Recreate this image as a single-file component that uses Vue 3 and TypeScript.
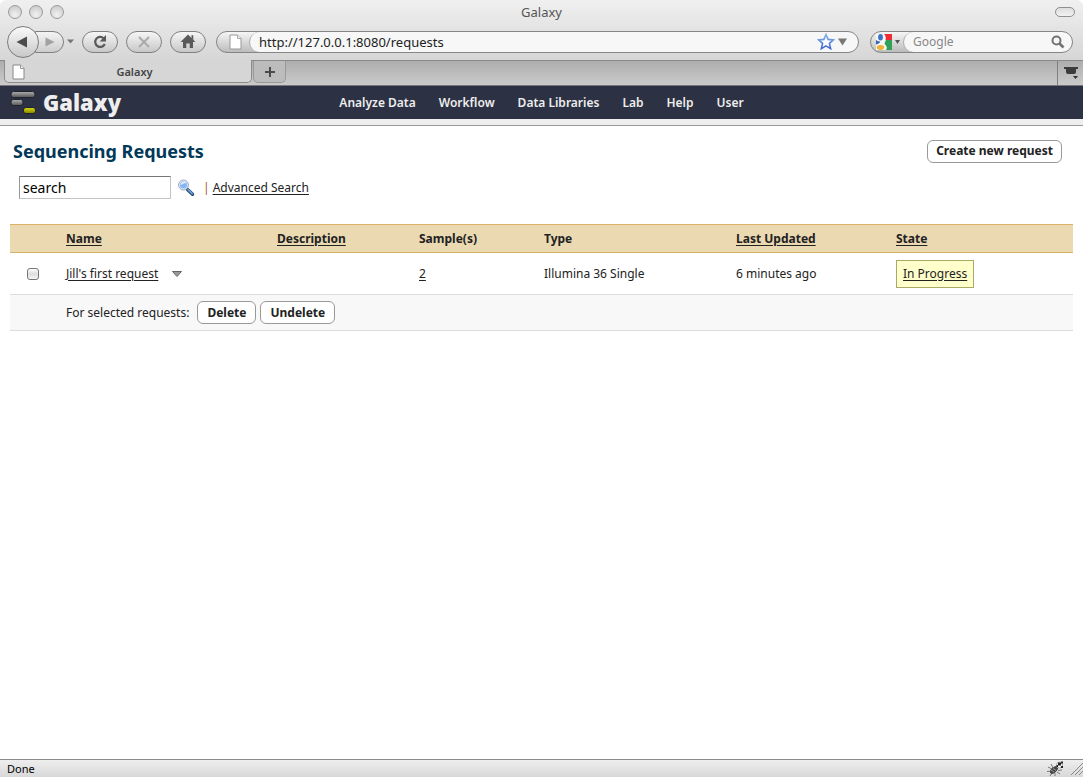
<script setup lang="ts">
import { ref } from 'vue'

interface Column {
  key: string
  label: string
  sortable: boolean
}

interface RequestRow {
  id: number
  name: string
  description: string
  samples: number
  type: string
  updated: string
  state: string
}

const navItems: string[] = ['Analyze Data', 'Workflow', 'Data Libraries', 'Lab', 'Help', 'User']

const columns: Column[] = [
  { key: 'name', label: 'Name', sortable: true },
  { key: 'description', label: 'Description', sortable: true },
  { key: 'samples', label: 'Sample(s)', sortable: false },
  { key: 'type', label: 'Type', sortable: false },
  { key: 'updated', label: 'Last Updated', sortable: true },
  { key: 'state', label: 'State', sortable: true },
]

const rows: RequestRow[] = [
  {
    id: 1,
    name: "Jill's first request",
    description: '',
    samples: 2,
    type: 'Illumina 36 Single',
    updated: '6 minutes ago',
    state: 'In Progress',
  },
]

const address = ref('http://127.0.0.1:8080/requests')
const webQuery = ref('')
const query = ref('search')
const selected = ref<number[]>([])
</script>

<template>
  <div class="window">
    <header class="chrome">
      <div class="titlebar">
        <div class="lights">
          <button class="light" type="button" aria-label="Close"></button>
          <button class="light" type="button" aria-label="Minimize"></button>
          <button class="light" type="button" aria-label="Zoom"></button>
        </div>
        <div class="window-title">Galaxy</div>
        <button class="toolbar-pill" type="button" aria-label="Toggle toolbar"></button>
      </div>

      <div class="toolbar">
        <div class="history">
          <button class="back" type="button" aria-label="Back">
            <svg width="12" height="12" viewBox="0 0 12 12"><path d="M0.5 6 11 0.5v11z" fill="#4c4c4c" /></svg>
          </button>
          <button class="forward" type="button" aria-label="Forward">
            <svg width="10" height="10" viewBox="0 0 10 10"><path d="M9.5 5 0.5 0.5v9z" fill="#a2a2a2" /></svg>
          </button>
          <button class="recent" type="button" aria-label="Recent pages">
            <svg width="7" height="5" viewBox="0 0 7 5"><path d="M0 0.5h7L3.5 4.5z" fill="#777" /></svg>
          </button>
        </div>
        <button class="tool" type="button" aria-label="Reload">
          <svg width="16" height="16" viewBox="0 0 16 16">
            <path d="M11.6 4.2A5 5 0 1 0 12.8 10" fill="none" stroke="#5a5a5a" stroke-width="2.2" />
            <path d="M14 1v6.5H7.6z" fill="#5a5a5a" />
          </svg>
        </button>
        <button class="tool" type="button" aria-label="Stop">
          <svg width="14" height="14" viewBox="0 0 14 14">
            <path d="M2 2l10 10M12 2 2 12" fill="none" stroke="#aaa" stroke-width="2" />
          </svg>
        </button>
        <button class="tool" type="button" aria-label="Home">
          <svg width="16" height="15" viewBox="0 0 16 15">
            <path d="M8 0.5 15.5 8H13v6H9.7V9.5H6.3V14H3V8H0.5z" fill="#5a5a5a" />
            <path d="M11.5 1.2h1.8V6l-1.8-1.8z" fill="#5a5a5a" />
          </svg>
        </button>
        <div class="field address">
          <span class="field-cap">
            <svg width="13" height="16" viewBox="0 0 13 16">
              <path d="M1 1h7.5L12 4.500V15H1z" fill="#fff" stroke="#999" />
              <path d="M8.500 1v3.500H12" fill="#eee" stroke="#aaa" />
            </svg>
          </span>
          <input v-model="address" class="field-input" type="text" aria-label="Address" />
          <button class="bare" type="button" aria-label="Bookmark">
            <svg width="18" height="17" viewBox="0 0 18 17">
              <defs>
                <linearGradient id="star-stroke" x1="0" y1="0" x2="0" y2="1">
                  <stop offset="0" stop-color="#83b4e8" />
                  <stop offset="1" stop-color="#3f62cc" />
                </linearGradient>
              </defs>
              <path
                d="M9 1.500l2.100 4.900 5.300.5-4 3.500 1.200 5.200L9 12.900l-4.600 2.700 1.200-5.200-4-3.500 5.300-.5z"
                fill="#fafcff" stroke="url(#star-stroke)" stroke-width="1.600"
              />
            </svg>
          </button>
          <button class="bare" type="button" aria-label="Show history">
            <svg width="9" height="8" viewBox="0 0 9 8"><path d="M0 0.500h9L4.500 7.500z" fill="#777" /></svg>
          </button>
        </div>
        <div class="field web-search">
          <button class="field-cap engine" type="button" aria-label="Search engine">
            <svg width="16" height="16" viewBox="0 0 16 16">
              <rect width="16" height="16" fill="#f7f7f7" />
              <path d="M8 0h8v6H9.500Q10.500 2.500 8 0z" fill="#ed2e36" />
              <path d="M10 6h6v10h-6q2-3-1-5.500-1-1.500 1-4.500z" fill="#33a05a" />
              <ellipse cx="4.500" cy="3.200" rx="2.400" ry="3.200" fill="#3b74c6" />
              <path d="M0 6q2.500 1.500 4.200 1.500Q4 9.500 0 10.500z" fill="#3b66b4" />
              <ellipse cx="4.500" cy="13.500" rx="3.700" ry="2.400" fill="#eeb335" />
            </svg>
            <svg width="5" height="4" viewBox="0 0 5 4"><path d="M0 0h5L2.500 4z" fill="#555" /></svg>
          </button>
          <input v-model="webQuery" class="field-input" type="text" placeholder="Google" aria-label="Web search" />
          <button class="bare" type="button" aria-label="Search the web">
            <svg width="14" height="14" viewBox="0 0 14 14">
              <circle cx="5.500" cy="5.500" r="4" fill="none" stroke="#747474" stroke-width="2" />
              <path d="M8.500 8.500l4 4" stroke="#747474" stroke-width="2.600" />
            </svg>
          </button>
        </div>
      </div>

      <div class="tabs">
        <div class="tab">
          <svg width="13" height="16" viewBox="0 0 13 16">
            <path d="M1 1h7.500L12 4.500V15H1z" fill="#fff" stroke="#888" />
            <path d="M8.500 1v3.500H12" fill="#eee" stroke="#999" />
          </svg>
          <span class="tab-title">Galaxy</span>
        </div>
        <button class="new-tab" type="button" aria-label="New tab">
          <svg width="12" height="12" viewBox="0 0 12 12"><path d="M6 1v10M1 6h10" stroke="#4a4a4a" stroke-width="2" /></svg>
        </button>
        <button class="all-tabs" type="button" aria-label="List all tabs">
          <svg width="16" height="14" viewBox="0 0 16 14">
            <path d="M1 1h14v2h-2v3q0 2-2 2H5Q3 8 3 6V3H1z" fill="#3c3c3c" />
            <path d="M10 10h5l-2.500 3z" fill="#333" />
          </svg>
        </button>
      </div>
    </header>

    <div class="masthead">
      <a class="brand" href="#">
        <svg width="26" height="24" viewBox="0 0 26 24">
          <defs>
            <linearGradient id="bar-gray" x1="0" y1="0" x2="0" y2="1">
              <stop offset="0" stop-color="#b0b0b0" />
              <stop offset="1" stop-color="#555" />
            </linearGradient>
            <linearGradient id="bar-gold" x1="0" y1="0" x2="0" y2="1">
              <stop offset="0" stop-color="#dada12" />
              <stop offset="1" stop-color="#858500" />
            </linearGradient>
          </defs>
          <rect x="1" y="0.500" width="24" height="6" rx="2.500" fill="url(#bar-gray)" stroke="#20232c" />
          <rect x="1" y="8.500" width="12" height="6" rx="2.500" fill="url(#bar-gray)" stroke="#20232c" />
          <rect x="13.500" y="16.500" width="12" height="6" rx="2.500" fill="url(#bar-gold)" stroke="#20232c" />
        </svg>
        <span>Galaxy</span>
      </a>
      <nav class="nav">
        <a v-for="item in navItems" :key="item" href="#">{{ item }}</a>
      </nav>
    </div>
    <div class="strip"></div>

    <main class="content">
      <div class="heading">
        <h1>Sequencing Requests</h1>
        <button class="action" type="button">Create new request</button>
      </div>

      <form class="search" @submit.prevent>
        <input v-model="query" type="text" aria-label="Search requests" />
        <button class="bare" type="submit" aria-label="Search">
          <svg width="18" height="18" viewBox="0 0 18 18">
            <path d="M10.500 10.500l5 4.800" stroke="#26466f" stroke-width="3.400" stroke-linecap="round" />
            <path d="M11 10.700l4.200 4" stroke="#6fa3dc" stroke-width="1.600" stroke-linecap="round" />
            <circle cx="6.500" cy="6" r="5" fill="#dbeaff" stroke="#a2a9b5" />
            <circle cx="6.500" cy="6" r="3.500" fill="#86b5f5" />
            <path d="M4 5.500q1-2.500 4.500-2" stroke="#eaf4ff" stroke-width="1.500" fill="none" />
          </svg>
        </button>
        <span class="divider">|</span>
        <a href="#">Advanced Search</a>
      </form>

      <table class="grid">
        <colgroup>
          <col class="w-check" />
          <col v-for="c in columns" :key="c.key" :class="'w-' + c.key" />
        </colgroup>
        <thead>
          <tr>
            <th></th>
            <th v-for="c in columns" :key="c.key" scope="col">
              <a v-if="c.sortable" href="#">{{ c.label }}</a>
              <template v-else>{{ c.label }}</template>
            </th>
          </tr>
        </thead>
        <tbody>
          <tr v-for="r in rows" :key="r.id">
            <td class="check">
              <input v-model="selected" type="checkbox" :value="r.id" :aria-label="r.name" />
            </td>
            <td>
              <div class="name">
                <a href="#">{{ r.name }}</a>
                <button class="bare" type="button" aria-label="Request menu">
                  <svg width="10" height="6" viewBox="0 0 10 6">
                    <path d="M0.500 0.500h9L5 5.500z" fill="#999" stroke="#666" />
                  </svg>
                </button>
              </div>
            </td>
            <td>{{ r.description }}</td>
            <td><a href="#">{{ r.samples }}</a></td>
            <td>{{ r.type }}</td>
            <td>{{ r.updated }}</td>
            <td><a class="state" href="#">{{ r.state }}</a></td>
          </tr>
        </tbody>
        <tfoot>
          <tr>
            <td></td>
            <td colspan="6">
              <div class="bulk">
                <span>For selected requests:</span>
                <button class="action" type="button">Delete</button>
                <button class="action" type="button">Undelete</button>
              </div>
            </td>
          </tr>
        </tfoot>
      </table>
    </main>

    <footer class="status">
      <span>Done</span>
      <svg class="bug" width="18" height="16" viewBox="0 0 18 16">
        <path
          d="M4 3l2 4M1 6l4 2M0 10.500l5-.5M3 15l2-3M8 15v-3M13 13l-3-2M15 9l-4 .5"
          stroke="#777" fill="none"
        />
        <ellipse cx="7" cy="9" rx="4.800" ry="2.600" transform="rotate(-42 7 9)" fill="#444" />
        <path d="M4 9l3 2M6 7.500l3 2" stroke="#999" />
        <circle cx="12.500" cy="4" r="3" fill="#fafafa" stroke="#aaa" />
        <path d="M11 1.500h3v3h-3zM14 0.500h2v2h-2zM14 5h2v2h-2zM9.500 4h1.500v2H9.500z" fill="#222" />
      </svg>
      <svg width="12" height="12" viewBox="0 0 12 12">
        <path d="M0 12 12 0M4 12l8-8M8 12l4-4" stroke="#8a8a8a" fill="none" />
      </svg>
    </footer>
  </div>
</template>

<style>
body {
  margin: 0;
  background: #fff;
}
</style>

<style scoped>
.window {
  display: flex;
  flex-direction: column;
  min-height: 100vh;
  background: #fff;
  color: #222;
  font-family: 'Noto Sans', 'Open Sans', sans-serif;
  font-size: 12px;
  line-height: 16px;
}
* {
  box-sizing: border-box;
}
button,
input {
  font: inherit;
  color: inherit;
  margin: 0;
}
button {
  display: flex;
  align-items: center;
  justify-content: center;
  padding: 0;
}
svg {
  display: block;
  flex: none;
}
a {
  color: inherit;
  text-underline-offset: 2px;
}
.bare {
  border: 0;
  background: none;
}

/* Browser chrome */
.chrome {
  background: linear-gradient(#f0f0f0, #d6d6d6 60px);
  border-radius: 6px 6px 0 0;
}
.titlebar {
  display: grid;
  grid-template-columns: 1fr auto 1fr;
  align-items: center;
  height: 23px;
  padding: 0 8px;
}
.lights {
  display: flex;
  gap: 7px;
}
.light {
  width: 14px;
  height: 14px;
  border: 1px solid #9c9c9c;
  border-radius: 50%;
  background: radial-gradient(circle at 50% 75%, #f2f2f2, #c4c4c4);
}
.window-title {
  color: #555;
  font-size: 13px;
}
.toolbar-pill {
  justify-self: end;
  width: 20px;
  height: 10px;
  border: 1px solid #8f8f8f;
  border-radius: 5px;
  background: linear-gradient(#ddd, #f2f2f2);
}
.toolbar {
  display: flex;
  align-items: center;
  gap: 8px;
  height: 38px;
  padding: 0 10px 0 7px;
  border-bottom: 1px solid #8a8a8a;
}
.history {
  display: flex;
  align-items: center;
  width: 67px;
}
.back {
  z-index: 1;
  flex: none;
  width: 32px;
  height: 32px;
  padding-right: 3px;
  border: 1px solid #7c7c7c;
  border-radius: 50%;
  background: linear-gradient(#fafafa, #c8c8c8);
}
.forward {
  flex: none;
  width: 29px;
  height: 22px;
  margin-left: -4px;
  border: 1px solid #808080;
  border-radius: 0 11px 11px 0;
  background: linear-gradient(#f4f4f4, #cdcdcd);
}
.recent {
  flex: none;
  width: 13px;
  height: 22px;
  border: 0;
  background: none;
}
.tool {
  flex: none;
  width: 36px;
  height: 22px;
  border: 1px solid #808080;
  border-radius: 11px;
  background: linear-gradient(#f6f6f6, #c8c8c8);
}
.field {
  display: flex;
  align-items: center;
  height: 22px;
  border: 1px solid #858585;
  border-radius: 11px;
  overflow: hidden;
}
.address {
  flex: 1;
  margin: 0 3px 0 2px;
  background: linear-gradient(90deg, transparent 60px, #f7f7f7 60px), linear-gradient(#f6f6f6, #bcbcbc);
}
.web-search {
  flex: none;
  width: 203px;
  background: linear-gradient(90deg, transparent 60px, #f7f7f7 60px), linear-gradient(#f6f6f6, #bcbcbc);
}
.field-cap {
  flex: none;
  display: flex;
  justify-content: center;
  width: 32px;
  padding-left: 4px;
}
.engine {
  gap: 3px;
  padding-left: 2px;
  border: 0;
  background: none;
}
.field-input {
  flex: 1;
  min-width: 0;
  height: 20px;
  padding: 0 9px;
  border: 0;
  border-left: 1px solid #aaa;
  border-radius: 10px 0 0 10px;
  background: #f7f7f7;
  outline: 0;
}
.address .field-input {
  font-size: 13px;
}
.field-input::placeholder {
  color: #888;
  opacity: 1;
}
.address .bare {
  padding-right: 3px;
}
.address .bare:last-child {
  padding-right: 11px;
}
.web-search .bare {
  padding-right: 7px;
}
.tabs {
  display: flex;
  height: 25px;
  padding-left: 4px;
  border-bottom: 1px solid #777;
  background: linear-gradient(#adadad, #cbcbcb);
}
.tab {
  display: flex;
  align-items: center;
  width: 248px;
  height: 23px;
  margin-top: -1px;
  padding: 1px 7px 0;
  border: 1px solid #8c8c8c;
  border-top: 0;
  border-radius: 0 0 5px 5px;
  background: #d6d6d6;
}
.tab-title {
  flex: 1;
  color: #444;
  font-size: 11px;
  font-weight: 600;
  text-align: center;
}
.new-tab {
  width: 33px;
  height: 22px;
  margin-left: 1px;
  border: 1px solid #999;
  border-top: 0;
  border-radius: 0 0 5px 5px;
  background: #bcbcbc;
}
.all-tabs {
  width: 26px;
  margin-left: auto;
  border: 0;
  border-left: 1px solid #808080;
  background: none;
}

/* Application masthead */
.masthead {
  display: grid;
  grid-template-columns: 1fr auto 1fr;
  align-items: center;
  height: 33px;
  padding: 0 10px;
  background: #2c3143;
  color: #eee;
}
.brand {
  display: flex;
  align-items: center;
  gap: 7px;
  font-family: 'Open Sans', 'Noto Sans', sans-serif;
  font-size: 22px;
  font-weight: 800;
  line-height: 33px;
  text-decoration: none;
}
.nav {
  display: flex;
  gap: 23px;
  font-weight: 600;
}
.nav a {
  text-decoration: none;
}
.strip {
  height: 7px;
  border-bottom: 1px solid #999;
  background: #eee;
}

/* Request list */
.content {
  flex: 1;
  padding: 12px 10px;
}
.heading {
  display: flex;
  align-items: center;
  justify-content: space-between;
  padding: 0 11px 0 3px;
}
h1 {
  margin: 0;
  color: #023858;
  font-size: 18px;
  font-weight: 700;
  line-height: 26px;
}
.action {
  height: 23px;
  padding: 0 9px;
  border: 1px solid #999;
  border-radius: 6px;
  background: #fff;
  font-weight: 700;
}
.heading .action {
  padding: 0 8px;
}
.search {
  display: flex;
  align-items: center;
  margin: 12px 0 25px;
  padding-left: 9px;
}
.search input {
  width: 152px;
  height: 23px;
  padding: 0 3px;
  border: 1px solid #c4c4c4;
  border-top-color: #777;
  border-left-color: #999;
  outline: 0;
  background: #fff;
  color: #000;
  font-size: 14px;
}
.search .bare {
  margin: 0 8px 0 6px;
}
.divider {
  margin-right: 3px;
  color: #a55c22;
}
.grid {
  width: 100%;
  border-collapse: collapse;
  table-layout: fixed;
}
.w-check {
  width: 51px;
}
.w-name {
  width: 211px;
}
.w-description {
  width: 142px;
}
.w-samples {
  width: 125px;
}
.w-type {
  width: 192px;
}
.w-updated {
  width: 160px;
}
th,
td {
  padding: 0 5px;
  text-align: left;
}
th {
  height: 28px;
  border-top: 1px solid #d8b365;
  border-bottom: 1px solid #d8b365;
  background: #ebd9b2;
  font-weight: 700;
}
tbody td {
  height: 42px;
  border-bottom: 1px solid #ddd;
}
tfoot td {
  height: 36px;
  border-bottom: 1px solid #ddd;
  background: #f8f8f8;
}
.check {
  padding-left: 17px;
}
.check input {
  display: block;
  appearance: none;
  width: 12px;
  height: 12px;
  border: 1px solid #777;
  border-radius: 3px;
  background: linear-gradient(#fff, #ddd 50%, #f6f6f6);
}
.name {
  display: flex;
  align-items: center;
  gap: 14px;
}
.state {
  display: inline-block;
  padding: 5px 6px;
  border: 1px solid #aaaa66;
  background: #ffffcc;
}
.bulk {
  display: flex;
  align-items: center;
  gap: 4px;
}
.bulk span {
  padding-right: 4px;
}

/* Status bar */
.status {
  display: flex;
  align-items: center;
  height: 18px;
  padding-left: 7px;
  border-top: 1px solid #8a8a8a;
  background: linear-gradient(#eee, #d8d8d8);
  color: #000;
  font-size: 11px;
}
.bug {
  margin: 0 6px 0 auto;
}
</style>
